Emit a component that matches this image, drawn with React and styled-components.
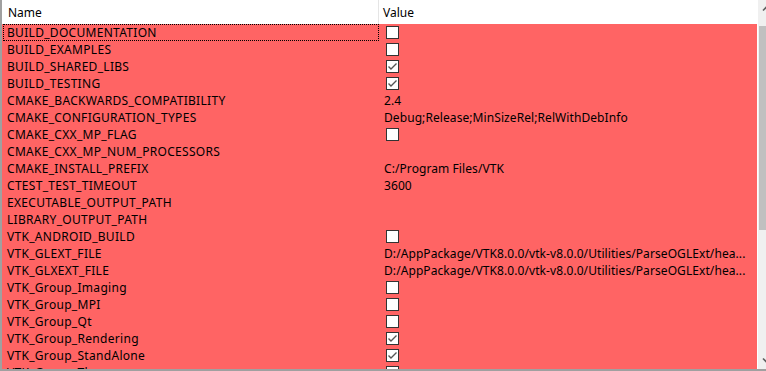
import React from 'react';
import styled, { createGlobalStyle } from 'styled-components';

const GlobalStyle = createGlobalStyle`
  html, body {
    margin: 0;
    padding: 0;
    background: #fff;
    overflow: hidden;
  }
`;

const fontFamily = `"Segoe UI", "Noto Sans", "Noto Sans CJK SC", sans-serif`;
const newEntryRed = 'rgb(255, 100, 100)';

const Frame = styled.div`
  width: 766px;
  height: 371px;
  overflow: hidden;
  box-sizing: border-box;
  border-left: 2px solid #a0a0a0;
  border-bottom: 2px solid #a0a0a0;
  display: flex;
  font-family: ${fontFamily};
  font-size: 12px;
  color: #000;
  background: #fff;
`;

const Table = styled.div`
  width: 755px;
  flex-shrink: 0;
  display: flex;
  flex-direction: column;
  overflow: hidden;
  border-right: 1px solid #fff;
`;

const Header = styled.div`
  display: grid;
  grid-template-columns: 377px 1fr;
  height: 24px;
  flex-shrink: 0;
  background: #fff;
`;

const HeaderCell = styled.div`
  display: flex;
  align-items: center;
  padding-left: ${p => p.$pad}px;
  border-right: ${p => (p.$divider ? '1px solid #e5e5e5' : 'none')};
`;

const Body = styled.div`
  flex: 1;
  overflow: hidden;
`;

const Row = styled.div`
  display: grid;
  grid-template-columns: 377px 1fr;
  height: 17px;
  background: ${newEntryRed};
`;

const NameCell = styled.div`
  display: flex;
  align-items: center;
  padding-left: 4px;
  margin-left: 1px;
  letter-spacing: 0.3px;
  white-space: nowrap;
  overflow: hidden;
  outline: ${p => (p.$focused ? '1px dotted #000' : 'none')};
  outline-offset: -1px;
`;

const ValueCell = styled.div`
  display: flex;
  align-items: center;
  padding-left: 5px;
  letter-spacing: 0.08px;
  white-space: nowrap;
  overflow: hidden;
`;

const Box = styled.span`
  width: 13px;
  height: 13px;
  box-sizing: border-box;
  border: 1px solid #333;
  background: #fff;
  margin-left: 2px;
  display: flex;
  align-items: center;
  justify-content: center;
`;

const Scrollbar = styled.div`
  width: 17px;
  flex-shrink: 0;
  background: #f0f0f0;
  display: flex;
  flex-direction: column;
`;

const ArrowButton = styled.div`
  height: 17px;
  display: flex;
  align-items: center;
  justify-content: center;
  flex-shrink: 0;
`;

const Track = styled.div`
  flex: 1;
  padding-top: 9px;
`;

const Thumb = styled.div`
  height: 204px;
  margin: 0 2px 0 1px;
  background: #c0c0c0;
`;

const Checkbox = ({ checked }) => (
  <Box>
    {checked && (
      <svg width="11" height="11" viewBox="0 0 11 11">
        <path d="M1.5 5.5 L4 8 L9.5 2.5" fill="none" stroke="#555" strokeWidth="1.4" />
      </svg>
    )}
  </Box>
);

const Arrow = ({ up }) => (
  <svg width="9" height="9" viewBox="0 0 9 9">
    <path
      d={up ? 'M1 6.5 L4.5 3 L8 6.5' : 'M1 2.5 L4.5 6 L8 2.5'}
      fill="none"
      stroke="#606060"
      strokeWidth="1.6"
    />
  </svg>
);

const glPath = 'D:/AppPackage/VTK8.0.0/vtk-v8.0.0/Utilities/ParseOGLExt/hea...';

const entries = [
  { name: 'BUILD_DOCUMENTATION', bool: false },
  { name: 'BUILD_EXAMPLES', bool: false },
  { name: 'BUILD_SHARED_LIBS', bool: true },
  { name: 'BUILD_TESTING', bool: true },
  { name: 'CMAKE_BACKWARDS_COMPATIBILITY', value: '2.4' },
  { name: 'CMAKE_CONFIGURATION_TYPES', value: 'Debug;Release;MinSizeRel;RelWithDebInfo' },
  { name: 'CMAKE_CXX_MP_FLAG', bool: false },
  { name: 'CMAKE_CXX_MP_NUM_PROCESSORS', value: '' },
  { name: 'CMAKE_INSTALL_PREFIX', value: 'C:/Program Files/VTK' },
  { name: 'CTEST_TEST_TIMEOUT', value: '3600' },
  { name: 'EXECUTABLE_OUTPUT_PATH', value: '' },
  { name: 'LIBRARY_OUTPUT_PATH', value: '' },
  { name: 'VTK_ANDROID_BUILD', bool: false },
  { name: 'VTK_GLEXT_FILE', value: glPath },
  { name: 'VTK_GLXEXT_FILE', value: glPath },
  { name: 'VTK_Group_Imaging', bool: false },
  { name: 'VTK_Group_MPI', bool: false },
  { name: 'VTK_Group_Qt', bool: false },
  { name: 'VTK_Group_Rendering', bool: true },
  { name: 'VTK_Group_StandAlone', bool: true },
  { name: 'VTK_Group_Tk', bool: false },
];

const App = () => (
  <>
    <GlobalStyle />
    <Frame>
      <Table>
        <Header>
          <HeaderCell $pad={6} $divider>Name</HeaderCell>
          <HeaderCell $pad={4}>Value</HeaderCell>
        </Header>
        <Body>
          {entries.map((e, i) => (
            <Row key={e.name}>
              <NameCell $focused={i === 0}>{e.name}</NameCell>
              <ValueCell>
                {typeof e.bool === 'boolean' ? <Checkbox checked={e.bool} /> : e.value}
              </ValueCell>
            </Row>
          ))}
        </Body>
      </Table>
      <Scrollbar>
        <ArrowButton><Arrow up /></ArrowButton>
        <Track><Thumb /></Track>
        <ArrowButton><Arrow /></ArrowButton>
      </Scrollbar>
    </Frame>
  </>
);

export default App;
